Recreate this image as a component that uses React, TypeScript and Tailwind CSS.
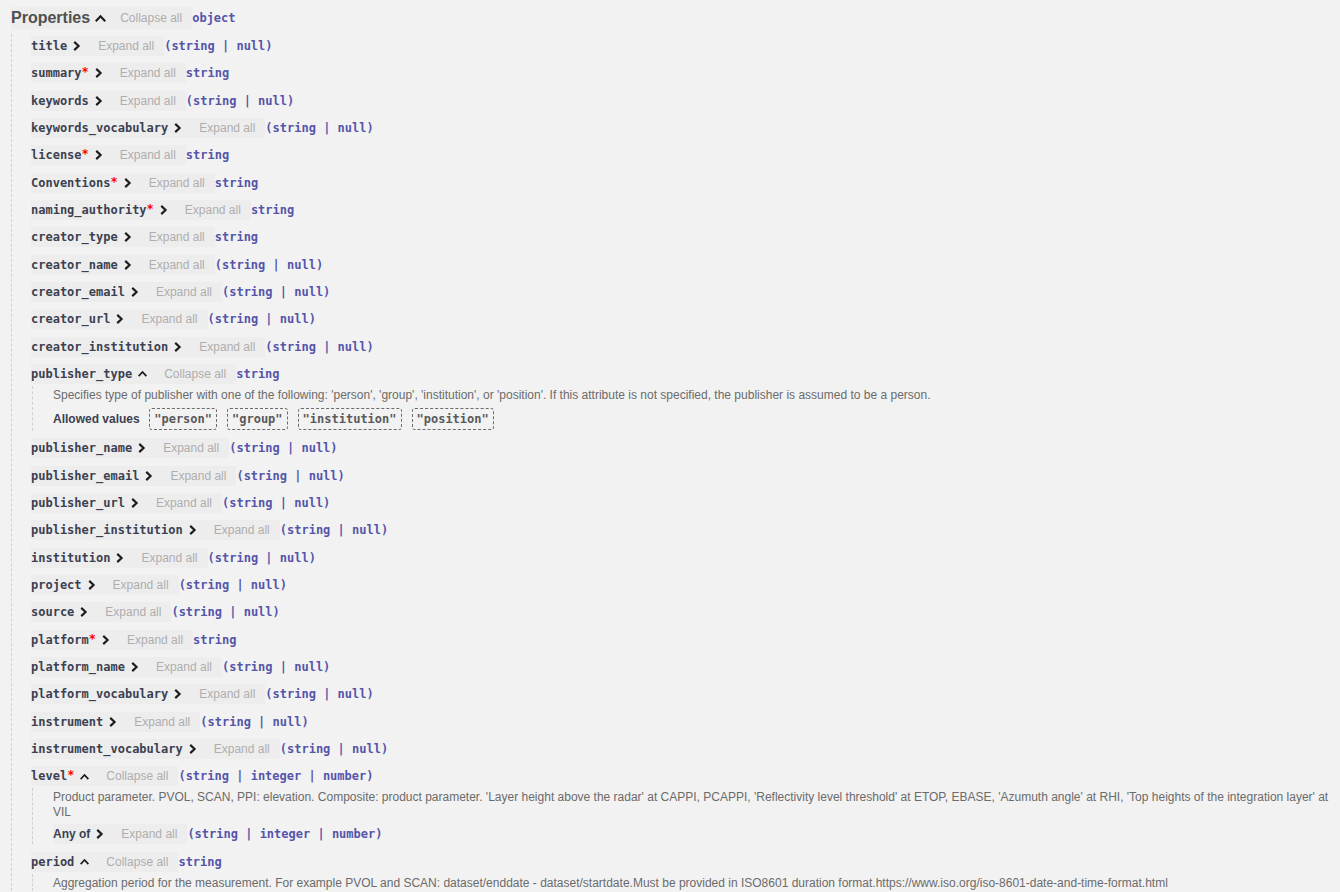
import React from "react";

const MONO = { fontFamily: '"DejaVu Sans Mono", monospace' };

function Chevron({ up = false, big = false }: { up?: boolean; big?: boolean }) {
  if (up) {
    return (
      <svg
        width={big ? 11 : 9}
        height={big ? 8 : 7}
        viewBox="0 0 11 8"
        className={big ? "ml-[5px] shrink-0" : "ml-[6px] shrink-0"}
      >
        <path d="M1.5 6.5 L5.5 2.2 L9.5 6.5" fill="none" stroke="#1b1b1b" strokeWidth="2.1" strokeLinecap="square" strokeLinejoin="miter" />
      </svg>
    );
  }
  return (
    <svg width="8" height="10" viewBox="0 0 8 10" className="ml-[6px] shrink-0">
      <path d="M2 1.6 L5.6 5 L2 8.4" fill="none" stroke="#1b1b1b" strokeWidth="2.1" strokeLinecap="square" strokeLinejoin="miter" />
    </svg>
  );
}

type Row = {
  name: string;
  req?: boolean;
  type: string;
  open?: boolean;
  desc?: string;
  allowed?: string[];
  anyOf?: string;
};

const rows: Row[] = [
  { name: "title", type: "(string | null)" },
  { name: "summary", req: true, type: "string" },
  { name: "keywords", type: "(string | null)" },
  { name: "keywords_vocabulary", type: "(string | null)" },
  { name: "license", req: true, type: "string" },
  { name: "Conventions", req: true, type: "string" },
  { name: "naming_authority", req: true, type: "string" },
  { name: "creator_type", type: "string" },
  { name: "creator_name", type: "(string | null)" },
  { name: "creator_email", type: "(string | null)" },
  { name: "creator_url", type: "(string | null)" },
  { name: "creator_institution", type: "(string | null)" },
  {
    name: "publisher_type",
    type: "string",
    open: true,
    desc: "Specifies type of publisher with one of the following: 'person', 'group', 'institution', or 'position'. If this attribute is not specified, the publisher is assumed to be a person.",
    allowed: ['"person"', '"group"', '"institution"', '"position"'],
  },
  { name: "publisher_name", type: "(string | null)" },
  { name: "publisher_email", type: "(string | null)" },
  { name: "publisher_url", type: "(string | null)" },
  { name: "publisher_institution", type: "(string | null)" },
  { name: "institution", type: "(string | null)" },
  { name: "project", type: "(string | null)" },
  { name: "source", type: "(string | null)" },
  { name: "platform", req: true, type: "string" },
  { name: "platform_name", type: "(string | null)" },
  { name: "platform_vocabulary", type: "(string | null)" },
  { name: "instrument", type: "(string | null)" },
  { name: "instrument_vocabulary", type: "(string | null)" },
  {
    name: "level",
    req: true,
    type: "(string | integer | number)",
    open: true,
    desc: "Product parameter. PVOL, SCAN, PPI: elevation. Composite: product parameter. 'Layer height above the radar' at CAPPI, PCAPPI, 'Reflectivity level threshold' at ETOP, EBASE, 'Azumuth angle' at RHI, 'Top heights of the integration layer' at VIL",
    anyOf: "(string | integer | number)",
  },
  {
    name: "period",
    type: "string",
    open: true,
    desc: "Aggregation period for the measurement. For example PVOL and SCAN: dataset/enddate - dataset/startdate.Must be provided in ISO8601 duration format.https://www.iso.org/iso-8601-date-and-time-format.html",
  },
];

function TypeLabel({ t }: { t: string }) {
  return (
    <span className="text-[12px] font-bold text-[#55a] whitespace-pre leading-[20px]" style={MONO}>
      {t}
    </span>
  );
}

function ExpandBtn({ open }: { open?: boolean }) {
  return (
    <span className="h-[20px] flex items-center px-[10px] bg-[#ededed] text-[12px] text-[#afaeae] leading-none">
      {open ? "Collapse all" : "Expand all"}
    </span>
  );
}

function PropRow({ r }: { r: Row }) {
  return (
    <div className="flex flex-col">
      <div className="flex items-center h-[20px]">
        <span className="h-[20px] flex items-center bg-[#ededed] pr-[7px]">
          <span className="text-[12px] font-bold text-[#3b4151] leading-none" style={MONO}>
            {r.name}
          </span>
          {r.req && (
            <span className="text-[12px] font-bold text-[#ff0000] leading-none self-start mt-[3px]" style={MONO}>
              *
            </span>
          )}
          <Chevron up={r.open} />
        </span>
        <ExpandBtn open={r.open} />
        <TypeLabel t={r.type} />
      </div>
      {r.open && (
        <div
          className={
            r.allowed
              ? "mt-[2px] ml-[1px] border-l border-dashed border-[#d0d0d0] pl-[20px] pt-[2.5px] pb-[1px] flex flex-col gap-[4.5px]"
              : "mt-[2px] ml-[1px] border-l border-dashed border-[#d0d0d0] pl-[20px] pt-[2px] flex flex-col gap-[4px]"
          }
        >
          {r.desc && (
            <p className="text-[12px] leading-[15px] text-[#6b6b6b]">{r.desc}</p>
          )}
          {r.allowed && (
            <div className="flex items-center h-[22px]">
              <span className="text-[12px] font-bold text-[#3b4151] mr-[9.5px]">Allowed values</span>
              <div className="flex items-center gap-[10px]">
                {r.allowed.map((a) => (
                  <span
                    key={a}
                    className="h-[22px] flex items-center px-[4px] border border-dashed border-[#6b6b6b] rounded-[3px] text-[12px] font-bold text-[#5a5a5a]"
                    style={MONO}
                  >
                    {a}
                  </span>
                ))}
              </div>
            </div>
          )}
          {r.anyOf && (
            <div className="flex items-center h-[20px]">
              <span className="h-[20px] flex items-center bg-[#ededed] pr-[7px]">
                <span className="text-[12px] font-bold text-[#3b4151] leading-none">Any of</span>
                <Chevron />
              </span>
              <ExpandBtn />
              <TypeLabel t={r.anyOf} />
            </div>
          )}
        </div>
      )}
    </div>
  );
}

export default function App() {
  return (
    <div
      className="min-h-screen w-full bg-[#f2f2f2] pl-[11px] pr-[10px] pt-[7px] overflow-hidden"
      style={{ fontFamily: '"Liberation Sans", Arial, sans-serif', height: 892 }}
    >
      <div className="flex items-center h-[22px]">
        <span className="h-[22px] flex items-center bg-[#ededed] pr-[4px]">
          <span className="text-[16px] font-bold text-[#505050] leading-none">Properties</span>
          <Chevron up big />
        </span>
        <span className="h-[22px] flex items-center px-[10px] bg-[#ededed] text-[12px] text-[#afaeae] leading-none">
          Collapse all
        </span>
        <TypeLabel t="object" />
      </div>
      <div className="mt-[5px] border-l border-dashed border-[#d0d0d0] pl-[19px] pt-[2px] flex flex-col gap-[7.33px]">
        {rows.map((r) => (
          <PropRow key={r.name} r={r} />
        ))}
      </div>
    </div>
  );
}
